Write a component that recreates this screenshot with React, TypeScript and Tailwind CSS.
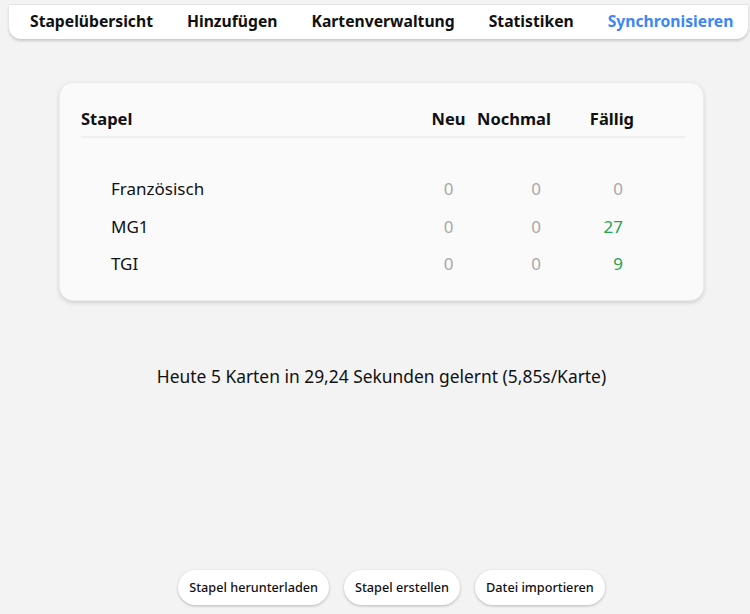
const font = { fontFamily: '"Noto Sans", "Open Sans", sans-serif' };

const tabs = ["Stapelübersicht", "Hinzufügen", "Kartenverwaltung", "Statistiken", "Synchronisieren"];

const decks = [
	{ name: "Französisch", neu: 0, nochmal: 0, faellig: 0 },
	{ name: "MG1", neu: 0, nochmal: 0, faellig: 27 },
	{ name: "TGI", neu: 0, nochmal: 0, faellig: 9 },
];

export default function App() {
	return (
		<div className="flex h-[614px] flex-col overflow-hidden bg-[#f3f3f3] text-[#111]" style={font}>
			<nav className="ml-[9px] mr-[2px] mt-[4px] flex h-[35px] items-center gap-[34px] rounded-b-[12px] border-t border-[#e4e4e4] bg-white pl-[21px] shadow-[0_2px_3px_rgba(0,0,0,0.18)]">
				{tabs.map((t) => (
					<span
						key={t}
						className={`text-[15.7px] font-bold ${t === "Synchronisieren" ? "text-[#3d87f5]" : "text-[#111]"}`}>
						{t}
					</span>
				))}
			</nav>

			<main className="flex flex-1 flex-col items-center pl-[13px]">
				<DeckTable />
				<p className="mt-[62px] text-[17.4px]">Heute 5 Karten in 29,24 Sekunden gelernt (5,85s/Karte)</p>
				<div className="mt-auto mb-[9px] flex gap-[15px] pl-[20px]">
					<FooterButton label="Stapel herunterladen" />
					<FooterButton label="Stapel erstellen" />
					<FooterButton label="Datei importieren" />
				</div>
			</main>
		</div>
	);
}

function DeckTable() {
	return (
		<div className="mt-[43px] w-[645px] rounded-[14px] border border-[#ececec] bg-[#fafafa] pl-[21px] pr-[18px] pb-[17px] pt-[24px] shadow-[0_2px_4px_rgba(0,0,0,0.14)]">
			<div className="grid grid-cols-[345px_45px_86px_84px_1fr] border-b-2 border-[#efefef] pb-[6px] text-[16.5px] font-bold leading-[23px]">
				<span>Stapel</span>
				<span className="text-center">Neu</span>
				<span className="text-center">Nochmal</span>
				<span className="pr-[7px] text-right">Fällig</span>
				<span />
			</div>
			<div className="pt-[32px]">
				{decks.map((d) => (
					<div key={d.name} className="grid h-[37.5px] grid-cols-[345px_45px_86px_84px_1fr] items-center text-[17px]">
						<span className="pl-[30px]">{d.name}</span>
						<span className="text-center text-[#a8a8a8]">{d.neu}</span>
						<span className="pr-[16px] text-right text-[#a8a8a8]">{d.nochmal}</span>
						<span className={`pr-[18px] text-right ${d.faellig > 0 ? "text-[#22a454]" : "text-[#a8a8a8]"}`}>
							{d.faellig}
						</span>
						<span />
					</div>
				))}
			</div>
		</div>
	);
}

function FooterButton({ label }: { label: string }) {
	return (
		<button className="h-[35px] rounded-full bg-white px-[11px] text-[12.7px] font-medium text-[#111] shadow-[0_1px_3px_rgba(0,0,0,0.25)]">
			{label}
		</button>
	);
}
